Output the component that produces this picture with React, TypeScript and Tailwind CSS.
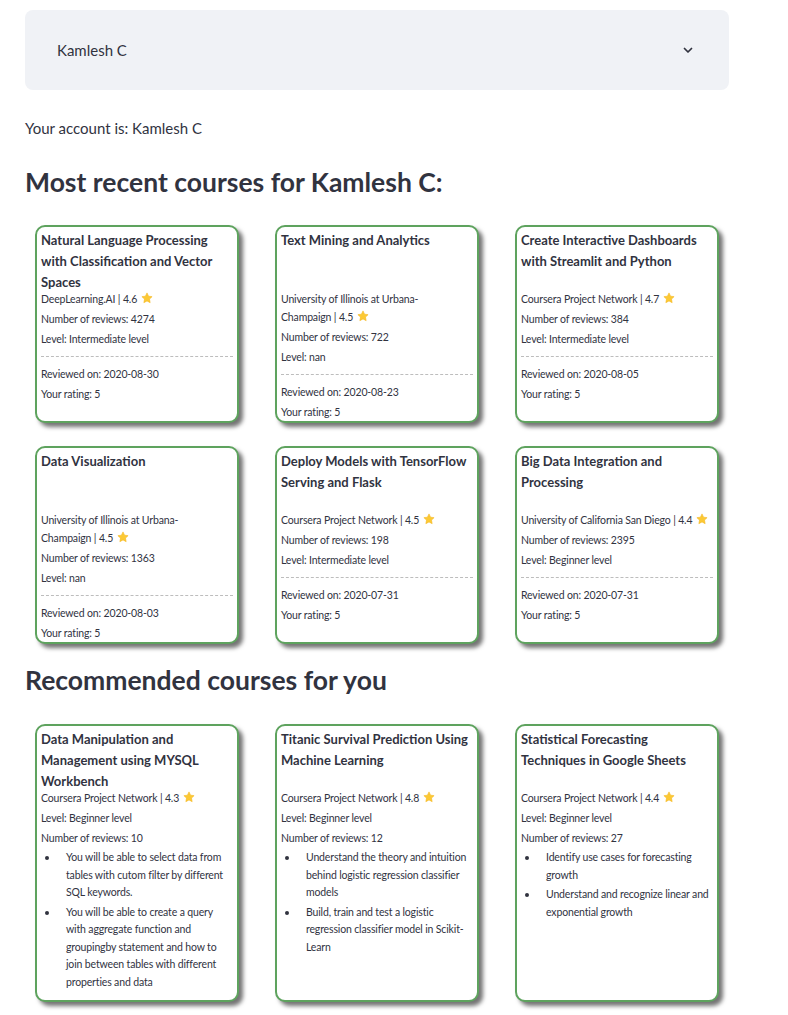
import React from "react";

const font = { fontFamily: "Lato, 'Noto Sans', sans-serif" };

function Star() {
  return (
    <svg width="12" height="12" viewBox="0 0 24 24" className="inline-block align-[-1px] ml-[4px]">
      <path
        d="M12 1.8l3.1 6.6 7.1.9-5.2 4.9 1.3 7.1L12 17.9l-6.3 3.4 1.3-7.1L1.8 9.3l7.1-.9z"
        fill="#fcc934"
        stroke="#f5b720"
        strokeWidth="1.2"
        strokeLinejoin="round"
      />
    </svg>
  );
}

type Recent = {
  title: string;
  org: string[];
  rating: string;
  reviews: string;
  level: string;
  date: string;
};

const recent: Recent[] = [
  { title: "Natural Language Processing with Classification and Vector Spaces", org: ["DeepLearning.AI"], rating: "4.6", reviews: "4274", level: "Intermediate level", date: "2020-08-30" },
  { title: "Text Mining and Analytics", org: ["University of Illinois at Urbana-", "Champaign"], rating: "4.5", reviews: "722", level: "nan", date: "2020-08-23" },
  { title: "Create Interactive Dashboards with Streamlit and Python", org: ["Coursera Project Network"], rating: "4.7", reviews: "384", level: "Intermediate level", date: "2020-08-05" },
  { title: "Data Visualization", org: ["University of Illinois at Urbana-", "Champaign"], rating: "4.5", reviews: "1363", level: "nan", date: "2020-08-03" },
  { title: "Deploy Models with TensorFlow Serving and Flask", org: ["Coursera Project Network"], rating: "4.5", reviews: "198", level: "Intermediate level", date: "2020-07-31" },
  { title: "Big Data Integration and Processing", org: ["University of California San Diego"], rating: "4.4", reviews: "2395", level: "Beginner level", date: "2020-07-31" },
];

type Rec = { title: string; org: string; rating: string; level: string; reviews: string; bullets: string[] };

const recs: Rec[] = [
  {
    title: "Data Manipulation and Management using MYSQL Workbench",
    org: "Coursera Project Network",
    rating: "4.3",
    level: "Beginner level",
    reviews: "10",
    bullets: [
      "You will be able to select data from tables with cutom filter by different SQL keywords.",
      "You will be able to create a query with aggregate function and groupingby statement and how to join between tables with different properties and data",
    ],
  },
  {
    title: "Titanic Survival Prediction Using Machine Learning",
    org: "Coursera Project Network",
    rating: "4.8",
    level: "Beginner level",
    reviews: "12",
    bullets: [
      "Understand the theory and intuition behind logistic regression classifier models",
      "Build, train and test a logistic regression classifier model in Scikit-Learn",
    ],
  },
  {
    title: "Statistical Forecasting Techniques in Google Sheets",
    org: "Coursera Project Network",
    rating: "4.4",
    level: "Beginner level",
    reviews: "27",
    bullets: ["Identify use cases for forecasting growth", "Understand and recognize linear and exponential growth"],
  },
];

const cardCls =
  "mx-[10px] border-2 border-[#5ea35e] rounded-[10px] bg-white px-[4px] pt-[3px] shadow-[4px_4px_4px_rgba(0,0,0,0.55)] text-[#31333f]";

function RecentCard({ c }: { c: Recent }) {
  return (
    <div className={cardCls + " h-[198px]"}>
      <div className="h-[60px] text-[13px] leading-[21px] font-bold">{c.title}</div>
      <div className="text-[10.5px] tracking-[-0.15px] leading-[18px] flex flex-col gap-[2px]">
        <div className="flex flex-col">
          {c.org.length > 1 && <p>{c.org[0]}</p>}
          <p>
            {c.org[c.org.length - 1]} | {c.rating}
            <Star />
          </p>
        </div>
        <p>Number of reviews: {c.reviews}</p>
        <p>Level: {c.level}</p>
        <div className="border-t border-dashed border-[#bdbdbd] my-[6px]" />
        <p>Reviewed on: {c.date}</p>
        <p>Your rating: 5</p>
      </div>
    </div>
  );
}

function RecCard({ c }: { c: Rec }) {
  return (
    <div className={cardCls + " h-[278px]"}>
      <div className="h-[60px] text-[13px] leading-[21px] font-bold">{c.title}</div>
      <div className="text-[10.5px] tracking-[-0.15px] leading-[18px] flex flex-col gap-[2px]">
        <p>
          {c.org} | {c.rating}
          <Star />
        </p>
        <p>Level: {c.level}</p>
        <p>Number of reviews: {c.reviews}</p>
        <ul className="pr-[4px] flex flex-col gap-[2px] leading-[17.5px]">
          {c.bullets.map((b, i) => (
            <li key={i} className="flex">
              <span className="w-[25px] shrink-0 pt-[7px] pl-[4px]">
                <span className="block w-[4px] h-[4px] rounded-full bg-[#31333f]" />
              </span>
              <span>{b}</span>
            </li>
          ))}
        </ul>
      </div>
    </div>
  );
}

export default function App() {
  return (
    <div style={font} className="bg-white w-[788px] min-h-[1015px] pl-[25px] pt-[10px] text-[#31333f]">
      <div className="w-[704px]">
        <div className="h-[80px] bg-[#f0f2f6] rounded-[8px] flex items-center justify-between pl-[32px] pr-[35px]">
          <span className="text-[15px]">Kamlesh C</span>
          <svg width="12" height="12" viewBox="0 0 24 24" fill="none" stroke="#31333f" strokeWidth="3.5" strokeLinecap="round" strokeLinejoin="round">
            <path d="M5 9l7 7 7-7" />
          </svg>
        </div>
        <p className="mt-[26px] text-[15px] leading-[24px]">Your account is: Kamlesh C</p>
        <h1 className="mt-[24px] text-[26.5px] leading-[36px] font-bold">Most recent courses for Kamlesh C:</h1>
        <div className="mt-[25px] grid grid-cols-3 gap-x-[16px] gap-y-[23px]">
          {recent.map((c, i) => (
            <RecentCard key={i} c={c} />
          ))}
        </div>
        <h1 className="mt-[18px] text-[26.5px] leading-[36px] font-bold">Recommended courses for you</h1>
        <div className="mt-[26px] grid grid-cols-3 gap-x-[16px]">
          {recs.map((c, i) => (
            <RecCard key={i} c={c} />
          ))}
        </div>
      </div>
    </div>
  );
}
